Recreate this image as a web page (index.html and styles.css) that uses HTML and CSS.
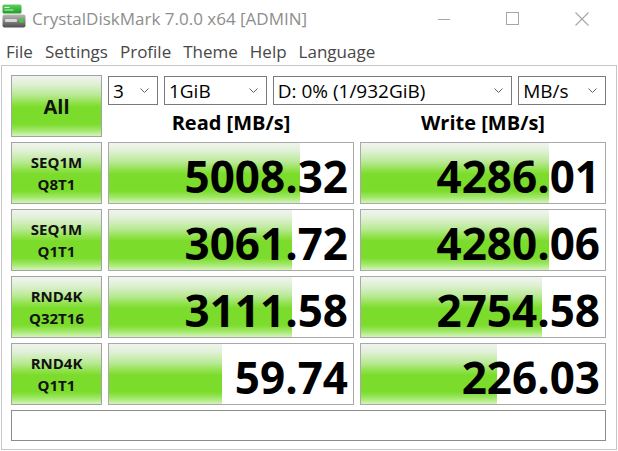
FILE: index.html
```html
<!DOCTYPE html>
<html lang="en">
<head>
<meta charset="utf-8">
<title>CrystalDiskMark 7.0.0 x64 [ADMIN]</title>
<link rel="stylesheet" href="styles.css">
</head>
<body>
<div class="window">
  <header class="titlebar">
    <svg class="appicon" width="24" height="24" viewBox="0 0 24 24">
      <defs>
        <linearGradient id="gtop" x1="0" y1="0" x2="0" y2="1">
          <stop offset="0" stop-color="#5fd35a"/>
          <stop offset="1" stop-color="#1f9a2a"/>
        </linearGradient>
        <linearGradient id="gbody" x1="0" y1="0" x2="0" y2="1">
          <stop offset="0" stop-color="#b9b9b9"/>
          <stop offset="0.45" stop-color="#8a8a8a"/>
          <stop offset="1" stop-color="#4e4e4e"/>
        </linearGradient>
      </defs>
      <rect x="0.5" y="0.5" width="19" height="9" rx="1.5" fill="url(#gtop)"/>
      <rect x="2.5" y="3" width="5" height="1" fill="#e8ffe8"/>
      <rect x="2.5" y="5.5" width="9" height="1" fill="#c8f5c8"/>
      <rect x="0.5" y="10.5" width="23" height="13" rx="2" fill="url(#gbody)"/>
      <rect x="3" y="15" width="12" height="3" rx="1" fill="#d8d8d8"/>
      <rect x="17.5" y="14.5" width="4" height="4" fill="#3fd23a"/>
    </svg>
    <span class="title">CrystalDiskMark 7.0.0 x64 [ADMIN]</span>
    <div class="controls">
      <span class="ctl"><svg width="12" height="12" viewBox="0 0 12 12"><line x1="0" y1="6.5" x2="12" y2="6.5" stroke="#a6a6a6" stroke-width="1"/></svg></span>
      <span class="ctl"><svg width="13" height="13" viewBox="0 0 13 13"><rect x="0.5" y="0.5" width="12" height="12" fill="none" stroke="#a6a6a6" stroke-width="1"/></svg></span>
      <span class="ctl"><svg width="14" height="14" viewBox="0 0 14 14"><path d="M0.5 0.5 L13.5 13.5 M13.5 0.5 L0.5 13.5" stroke="#a6a6a6" stroke-width="1.1" fill="none"/></svg></span>
    </div>
  </header>

  <nav class="menubar">
    <span>File</span>
    <span>Settings</span>
    <span>Profile</span>
    <span>Theme</span>
    <span>Help</span>
    <span>Language</span>
  </nav>

  <main class="panel">
    <div class="grid">
      <div class="btn all">All</div>
      <div class="top">
        <div class="selects">
          <div class="combo c-count"><span>3</span><svg class="chev" width="9" height="5" viewBox="0 0 9 5"><polyline points="0.5,0.5 4.5,4.5 8.5,0.5" fill="none" stroke="#606060" stroke-width="1"/></svg></div>
          <div class="combo c-size"><span>1GiB</span><svg class="chev" width="9" height="5" viewBox="0 0 9 5"><polyline points="0.5,0.5 4.5,4.5 8.5,0.5" fill="none" stroke="#606060" stroke-width="1"/></svg></div>
          <div class="combo c-drive"><span>D: 0% (1/932GiB)</span><svg class="chev" width="9" height="5" viewBox="0 0 9 5"><polyline points="0.5,0.5 4.5,4.5 8.5,0.5" fill="none" stroke="#606060" stroke-width="1"/></svg></div>
          <div class="combo c-unit"><span>MB/s</span><svg class="chev" width="9" height="5" viewBox="0 0 9 5"><polyline points="0.5,0.5 4.5,4.5 8.5,0.5" fill="none" stroke="#606060" stroke-width="1"/></svg></div>
        </div>
        <div class="heads">
          <span>Read [MB/s]</span>
          <span>Write [MB/s]</span>
        </div>
      </div>

      <div class="btn label"><span>SEQ1M</span><span>Q8T1</span></div>
      <div class="cell" style="--w:191px">5008.32</div>
      <div class="cell" style="--w:188px">4286.01</div>

      <div class="btn label"><span>SEQ1M</span><span>Q1T1</span></div>
      <div class="cell" style="--w:183px">3061.72</div>
      <div class="cell" style="--w:188px">4280.06</div>

      <div class="btn label"><span>RND4K</span><span>Q32T16</span></div>
      <div class="cell" style="--w:183px">3111.58</div>
      <div class="cell" style="--w:181px">2754.58</div>

      <div class="btn label"><span>RND4K</span><span>Q1T1</span></div>
      <div class="cell" style="--w:113px">59.74</div>
      <div class="cell" style="--w:136px">226.03</div>

      <div class="comment"></div>
    </div>
  </main>
</div>
</body>
</html>
```

FILE: styles.css
```css
:root {
  --green: linear-gradient(to bottom,
    #f1f4ef 0%,
    #dff0d4 14%,
    #b8e993 32%,
    #8fe14a 45%,
    #7bdc2b 52%,
    #7bdc2b 80%,
    #9fe766 90%,
    #d4f4bb 100%);
}

html, body {
  margin: 0;
  background: #ffffff;
}

body {
  font-family: "Open Sans", "Noto Sans", sans-serif;
}

.window {
  width: 618px;
  height: 451px;
  display: flex;
  flex-direction: column;
  overflow: hidden;
}

/* Title bar */
.titlebar {
  height: 37px;
  display: flex;
  align-items: center;
  flex: none;
}

.appicon {
  margin-left: 2px;
  align-self: flex-start;
  margin-top: 4px;
  flex: none;
}

.title {
  margin-left: 6px;
  font-size: 17px;
  color: #8e8e8e;
  white-space: nowrap;
}

.controls {
  margin-left: auto;
  margin-right: 2px;
  display: flex;
  align-self: stretch;
}

.ctl {
  width: 69px;
  display: flex;
  align-items: center;
  justify-content: center;
}

/* Menu bar */
.menubar {
  height: 28px;
  flex: none;
  display: flex;
  align-items: center;
  gap: 12px;
  padding-left: 6px;
  font-size: 17px;
  color: #474747;
}

/* Main panel */
.panel {
  margin-left: 1px;
  width: 616px;
  height: 385px;
  box-sizing: border-box;
  border: 1px solid #c6c6c6;
  padding: 9px 10px 8px 9px;
  flex: none;
}

.grid {
  display: grid;
  grid-template-columns: 91px 246px 246px;
  grid-template-rows: 62px repeat(4, 62px) 31px;
  column-gap: 6px;
  row-gap: 5px;
}

.btn {
  box-sizing: border-box;
  border: 1px solid #a3a3a3;
  background: var(--green);
  display: flex;
  align-items: center;
  justify-content: center;
  font-weight: 700;
  color: #111;
}

.all {
  font-size: 20px;
}

.label {
  flex-direction: column;
  font-size: 15px;
  line-height: 22px;
}

.top {
  grid-column: 2 / 4;
  display: flex;
  flex-direction: column;
}

.selects {
  display: flex;
  gap: 6px;
  margin-top: 1px;
  height: 29px;
}

.combo {
  box-sizing: border-box;
  border: 1px solid #7a7a7a;
  background: #fff;
  display: flex;
  align-items: center;
  justify-content: space-between;
  padding: 0 8px 0 4px;
  font-size: 19px;
  color: #000;
  white-space: nowrap;
}

.chev {
  flex: none;
}

.c-count { width: 50px; }
.c-size { width: 103px; }
.c-drive { width: 240px; }
.c-unit { width: 88px; }

.heads {
  flex: 1;
  display: grid;
  grid-template-columns: 246px 246px;
  column-gap: 6px;
  align-items: center;
  text-align: center;
  font-size: 20px;
  font-weight: 700;
  color: #000;
  padding-top: 3px;
}

.cell {
  box-sizing: border-box;
  border: 1px solid #a9a9a9;
  background: var(--green) no-repeat 0 0 / var(--w) 100%, #ffffff;
  display: flex;
  align-items: center;
  justify-content: flex-end;
  padding: 5px 5px 0 0;
  font-size: 44px;
  font-weight: 700;
  line-height: 1;
  color: #000;
}

.comment {
  grid-column: 1 / 4;
  box-sizing: border-box;
  border: 1px solid #8c8c8c;
  background: #fff;
}
```
